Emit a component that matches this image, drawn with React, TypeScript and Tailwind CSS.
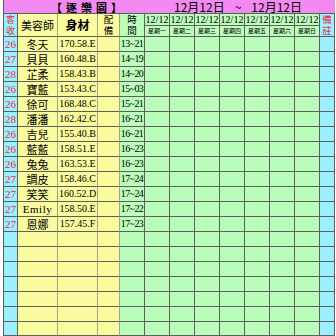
import React from "react";

const rows: [string, string, string, string][] = [
  ["26", "冬天", "170.58.E", "13~21"],
  ["27", "貝貝", "160.48.B", "14~19"],
  ["28", "芷柔", "158.43.B", "14~20"],
  ["26", "寶藍", "153.43.C", "15~03"],
  ["26", "徐可", "168.48.C", "15~21"],
  ["28", "潘潘", "162.42.C", "16~21"],
  ["26", "吉兒", "155.40.B", "16~21"],
  ["26", "藍藍", "158.51.E", "16~23"],
  ["26", "兔兔", "163.53.E", "16~23"],
  ["27", "調皮", "158.46.C", "17~24"],
  ["27", "笑笑", "160.52.D", "17~24"],
  ["27", "Emily", "158.50.E", "17~22"],
  ["27", "恩娜", "157.45.F", "17~23"],
];

const all: [string, string, string, string][] = [
  ...rows,
  ...Array.from({ length: 7 }, () => ["", "", "", ""] as [string, string, string, string]),
];

const days = ["星期一", "星期二", "星期三", "星期四", "星期五", "星期六", "星期日"];

const cjk = "font-['Noto_Sans_CJK_TC','Noto_Sans_CJK_SC',serif]";
const ser = "font-['Liberation_Serif','DejaVu_Serif',serif]";

const B = "border-r border-b border-[#5e5e5e]";
const BY = "border-r border-b border-r-[#a3a382] border-b-[#5e5e5e]";

export default function App() {
  return (
    <div className="w-[336px] h-[336px] bg-white overflow-hidden">
      <div className="ml-[3px] w-[332px] h-[336px] grid border-l border-[#5e5e5e] grid-cols-[14px_40px_40px_22px_25px_repeat(7,25px)_15px] grid-rows-[14px_12px_11px_repeat(19,15px)_14px]">
        {/* title row */}
        <div className={`col-span-full bg-[#f38af2] border-b border-[#5e5e5e] flex items-center ${cjk} text-black`}>
          <div className="ml-[45px] flex flex-none items-center font-bold text-[11px] leading-[12px]">
            {["【", "逐", "樂", "園", "】"].map((c, i) => (
              <span key={i} className="w-[15px] flex-none text-center">{c}</span>
            ))}
          </div>
          <div className="ml-[50px] flex flex-none items-center text-[12px] leading-[12px]">
            <span>12月12日</span>
            <span className="ml-[10px]">~</span>
            <span className="ml-[10px]">12月12日</span>
          </div>
        </div>

        {/* header */}
        <div className={`row-span-2 bg-[#9cefff] ${B} flex flex-col items-center justify-center text-[9px] leading-[11px] text-[#e23040] ${cjk}`}>
          <span>客</span>
          <span>收</span>
        </div>
        <div className={`row-span-2 bg-[#fafa9e] ${BY} flex items-center justify-center text-[11px] leading-none ${cjk}`}>美容師</div>
        <div className={`row-span-2 bg-[#fafa9e] ${BY} flex items-center justify-center text-[12px] leading-none font-bold ${cjk}`}>身材</div>
        <div className={`row-span-2 bg-[#fafa9e] ${BY} flex flex-col items-center justify-center text-[9.5px] leading-[11px] ${cjk}`}>
          <span>配</span>
          <span>備</span>
        </div>
        <div className={`row-span-2 bg-[#bbfdbb] ${B} flex flex-col items-center justify-center text-[9.5px] leading-[11px] ${cjk}`}>
          <span>時</span>
          <span>間</span>
        </div>
        {days.map((d) => (
          <div key={d + "t"} className={`bg-[#bbfdbb] ${B} flex items-center justify-center text-[10px] leading-none ${ser}`}>12/12</div>
        ))}
        <div className={`row-span-2 bg-[#9cefff] ${B} flex flex-col items-center justify-center text-[9.5px] leading-[11px] text-[#e23040] ${cjk}`}>
          <span>備</span>
          <span>註</span>
        </div>
        {days.map((d) => (
          <div key={d} className={`bg-[#bbfdbb] ${B} flex items-center justify-center text-[6px] leading-none ${cjk}`}>{d}</div>
        ))}

        {/* data rows */}
        {all.map((r, i) => (
          <React.Fragment key={i}>
            <div className={`bg-[#9cefff] ${B} flex items-center justify-center text-[11px] leading-none text-[#e23040] ${ser}`}>{r[0]}</div>
            <div className={`bg-[#fafa9e] ${BY} flex items-center justify-center text-[11px] leading-none ${r[1] === "Emily" ? ser + " tracking-[0.5px]" : cjk}`}>{r[1]}</div>
            <div className={`bg-[#fafa9e] ${BY} flex items-center justify-center text-[10px] leading-none ${ser}`}>{r[2]}</div>
            <div className={`bg-[#fafa9e] ${BY}`}></div>
            <div className={`bg-[#bbfdbb] ${B} flex items-center justify-center text-[10px] leading-none tracking-[-0.6px] ${ser}`}>{r[3]}</div>
            {days.map((d) => (
              <div key={d} className={`bg-[#bbfdbb] ${B}`}></div>
            ))}
            <div className={`bg-[#9cefff] ${B}`}></div>
          </React.Fragment>
        ))}
      </div>
    </div>
  );
}
